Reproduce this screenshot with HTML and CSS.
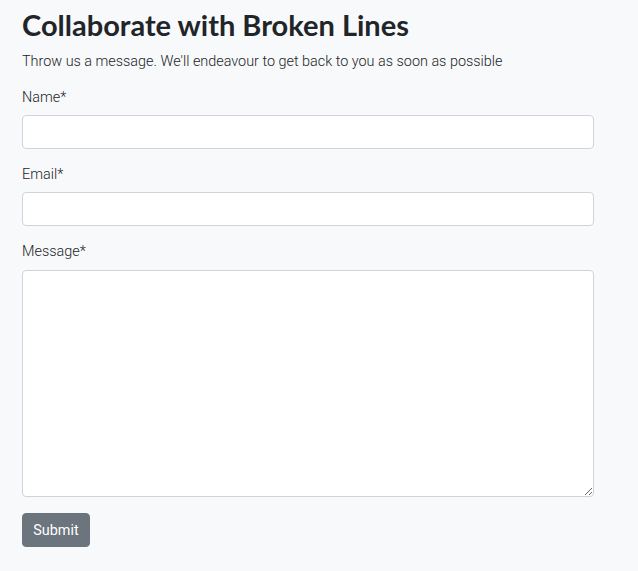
FILE: index.html
```html
<!DOCTYPE html>
<html>
<head>
<meta charset="utf-8">
<link rel="stylesheet" href="styles.css">
</head>
<body>
<main class="page">
  <h1 class="title">Collaborate with Broken Lines</h1>
  <p class="lead">Throw us a message. We'll endeavour to get back to you as soon as possible</p>
  <form class="form">
    <div class="group">
      <label class="label">Name*</label>
      <input class="control" type="text">
    </div>
    <div class="group">
      <label class="label">Email*</label>
      <input class="control" type="email">
    </div>
    <div class="group group-message">
      <label class="label">Message*</label>
      <textarea class="control area"></textarea>
    </div>
    <button class="btn" type="button">Submit</button>
  </form>
</main>
</body>
</html>
```
FILE: styles.css
```css
html, body {
  margin: 0;
  padding: 0;
  background: #f8f9fa;
}
body {
  font-family: Roboto, "Open Sans", sans-serif;
  font-weight: 300;
  color: #212529;
  font-size: 14.4px;
}
.page {
  width: 572px;
  padding: 7px 22px 0;
}
.title {
  font-family: Lato, sans-serif;
  font-weight: 700;
  font-size: 29px;
  line-height: 35px;
  margin: 0 0 10px;
  color: #212529;
}
.lead {
  margin: 0 0 16px;
  line-height: 20px;
  font-size: 14.4px;
}
.form {
  display: flex;
  flex-direction: column;
}
.group {
  display: flex;
  flex-direction: column;
  margin-bottom: 16px;
}
.label {
  line-height: 19px;
  margin-bottom: 8px;
  font-size: 14.4px;
}
.group-message .label {
  margin-bottom: 9px;
}
.control {
  box-sizing: border-box;
  width: 572px;
  height: 34px;
  border: 1px solid #ced4da;
  border-radius: 4px;
  background: #fff;
  margin: 0;
  font-family: inherit;
  font-size: 14px;
}
.area {
  height: 227px;
  resize: vertical;
}
.btn {
  align-self: flex-start;
  height: 34px;
  padding: 0;
  background: #6c757d;
  color: #fff;
  border: 1px solid #6c757d;
  border-radius: 4px;
  font-family: Roboto, sans-serif;
  font-weight: 400;
  font-size: 14.4px;
  width: 68px;
}
```
